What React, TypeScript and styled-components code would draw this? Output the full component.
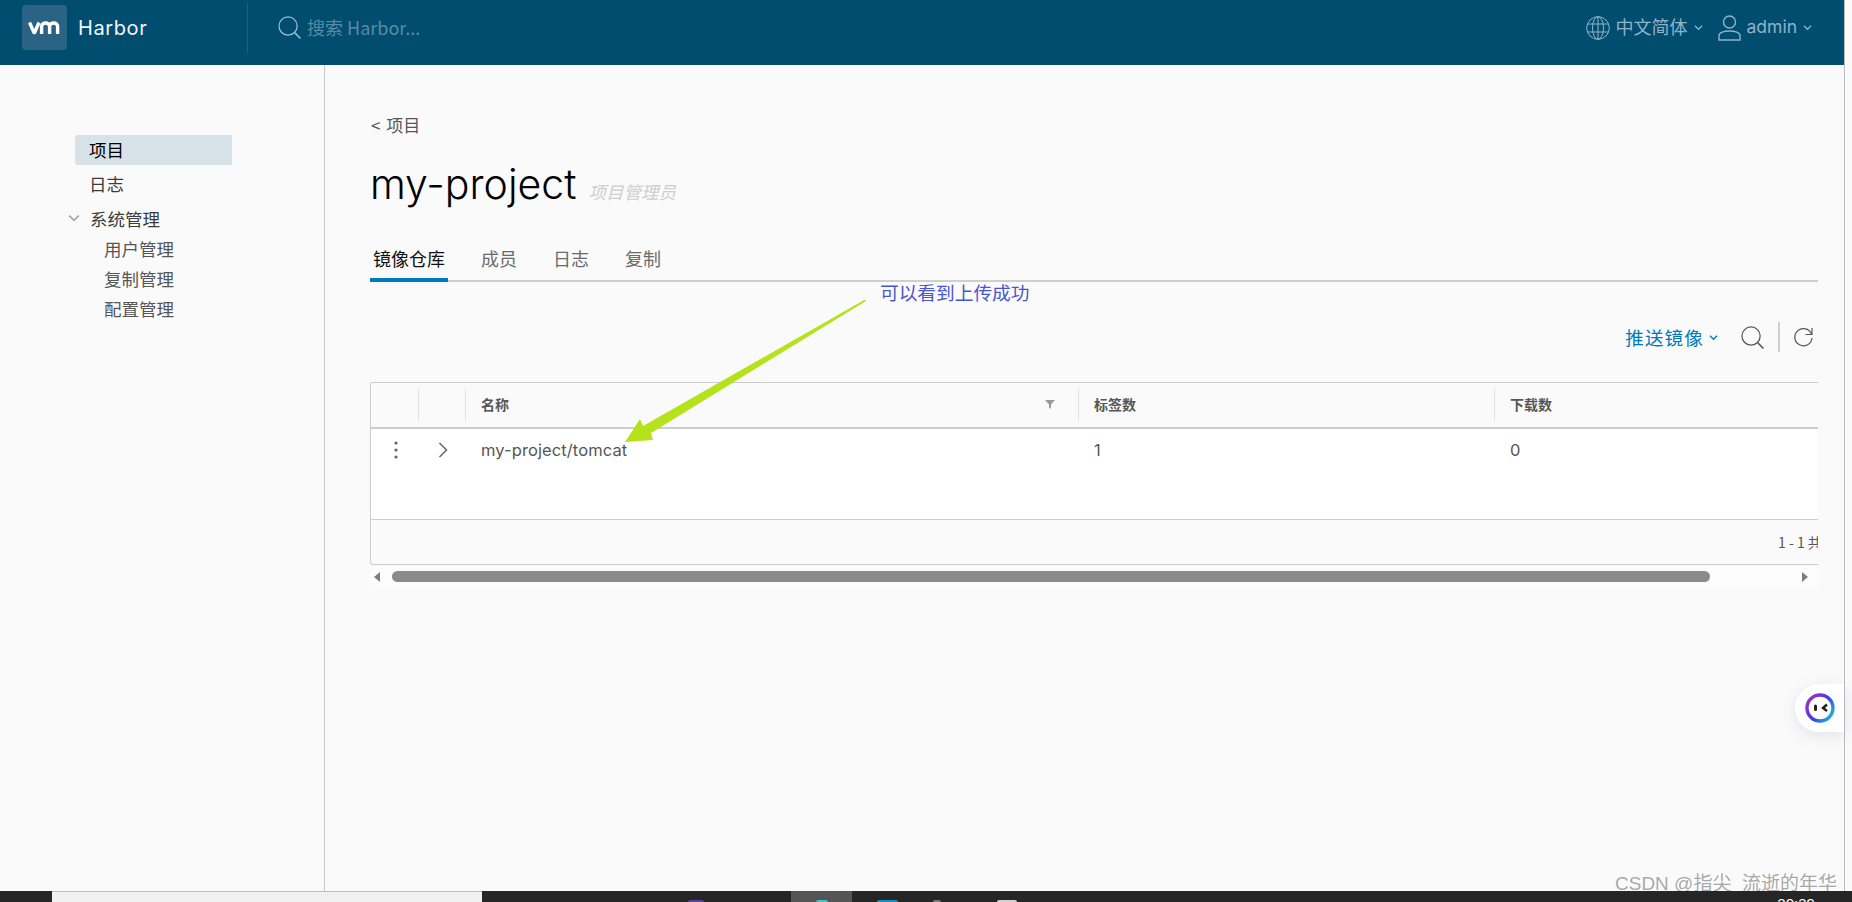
import styled, { createGlobalStyle } from 'styled-components';

const GlobalStyle = createGlobalStyle`
  html, body {
    margin: 0;
    padding: 0;
    height: 902px;
    overflow: hidden;
    background: #fafafa;
    font-family: Inter, "Noto Sans CJK SC", sans-serif;
  }
  * { box-sizing: border-box; }
`;

const cjk = `"Noto Sans CJK SC", Inter, sans-serif`;

const Page = styled.div`
  width: 1852px;
  height: 902px;
  display: flex;
  flex-direction: column;
  overflow: hidden;
  position: relative;
`;

const Shell = styled.div`
  width: 1845px;
  height: 891px;
  border-right: 1px solid #bdbdbd;
  display: flex;
  flex-direction: column;
`;

const Header = styled.header`
  height: 65px;
  background: #004d70;
  display: flex;
  align-items: center;
  padding: 0 0 10px 22px;
  color: #8fb4c8;
`;

const LogoBox = styled.div`
  width: 45px;
  height: 45px;
  border-radius: 4px;
  background: #2a6384;
  display: flex;
  align-items: center;
  justify-content: center;
`;

const Brand = styled.span`
  margin-left: 11px;
  width: 169px;
  font-size: 20px;
  letter-spacing: 0.6px;
  color: #f2f6f8;
`;

const HeaderDivider = styled.div`
  width: 1px;
  height: 50px;
  background: #1d6083;
`;

const HeaderSearch = styled.div`
  margin-left: 30px;
  display: flex;
  align-items: center;
  gap: 6px;
  flex: 1;
  font-family: ${cjk};
  font-size: 18px;
  color: #5a8aa5;
`;

const PlaceholderText = styled.span`
  padding-bottom: 2px;
`;

const HeaderMenu = styled.div<{ $right: number }>`
  display: flex;
  align-items: center;
  gap: 6px;
  margin-right: ${p => p.$right}px;
  font-family: ${cjk};
  font-size: 18px;
  font-weight: 400;
`;

const MenuLabel = styled.span`
  padding-bottom: 3px;
`;

const AdminName = styled.span`
  padding-bottom: 2px;
  font-family: Inter, sans-serif;
  font-size: 17.5px;
`;

const Body = styled.div`
  flex: 1;
  display: flex;
`;

const Sidebar = styled.nav`
  width: 325px;
  border-right: 1px solid #c8c8c8;
  padding: 70px 0 0 75px;
  font-family: ${cjk};
  font-size: 17.5px;
  color: #444;
`;

const NavItem = styled.div<{ $active?: boolean }>`
  width: 157px;
  height: 30px;
  line-height: 30px;
  padding-left: 14px;
  margin-bottom: 4px;
  border-radius: 3px 0 0 3px;
  background: ${p => (p.$active ? '#d8e3e9' : 'transparent')};
  color: ${p => (p.$active ? '#000' : '#3c3c3c')};
`;

const NavGroup = styled.div`
  height: 30px;
  margin: 0 0 1px -7px;
  display: flex;
  align-items: center;
  gap: 10px;
  color: #3c3c3c;
`;

const NavSub = styled.div`
  height: 30px;
  line-height: 30px;
  padding-left: 29px;
  color: #565656;
`;

const Main = styled.main`
  flex: 1;
  padding: 48px 26px 0 45px;
  min-width: 0;
`;

const BackLink = styled.div`
  height: 24px;
  line-height: 24px;
  padding-left: 1px;
  font-family: ${cjk};
  font-size: 17px;
  word-spacing: 2px;
  color: #565656;
`;

const TitleRow = styled.div`
  margin-top: 22px;
  height: 50px;
  display: flex;
  align-items: baseline;
  gap: 12px;
`;

const Title = styled.h1`
  margin: 0;
  font-family: Inter, sans-serif;
  font-size: 41px;
  line-height: 50px;
  font-weight: 300;
  color: #000;
`;

const TitleRole = styled.span`
  font-family: ${cjk};
  font-style: italic;
  font-size: 17.5px;
  color: #cfcfcf;
`;

const Tabs = styled.div`
  margin-top: 30px;
  height: 43px;
  display: flex;
  gap: 30px;
  border-bottom: 2px solid #cfcfcf;
`;

const Tab = styled.div<{ $active?: boolean }>`
  height: 43px;
  padding: 2px 3px 4px 3px;
  display: flex;
  align-items: center;
  font-family: ${cjk};
  font-size: 18px;
  color: ${p => (p.$active ? '#111' : '#6a6a6a')};
  border-bottom: 4px solid ${p => (p.$active ? '#0079b8' : 'transparent')};
`;

const Toolbar = styled.div`
  margin-top: 40px;
  height: 30px;
  display: flex;
  align-items: center;
  justify-content: flex-end;
  padding-right: 5px;
`;

const PushButton = styled.div`
  display: flex;
  align-items: center;
  gap: 5px;
  margin-right: 23px;
  font-family: ${cjk};
  font-size: 18.5px;
  letter-spacing: 1.2px;
  color: #0079b8;
`;

const ToolDivider = styled.div`
  width: 2px;
  height: 30px;
  background: #cfcfcf;
  margin: 0 14px;
`;

const Table = styled.div`
  margin-top: 30px;
  height: 183px;
  overflow: hidden;
  border: 1px solid #cccccc;
  border-right: none;
  border-radius: 3px 0 0 3px;
`;

const columns = '47px 47px 613px 416px 1fr';

const HeadRow = styled.div`
  height: 46px;
  display: grid;
  grid-template-columns: ${columns};
  align-items: center;
  border-bottom: 2px solid #cccccc;
  background: #fafafa;
`;

const HeadCell = styled.div<{ $first?: boolean }>`
  height: 32px;
  display: flex;
  align-items: center;
  justify-content: space-between;
  padding: 0 23px 2px 15px;
  border-left: ${p => (p.$first ? 'none' : '1px solid #e2e2e2')};
  font-family: ${cjk};
  font-size: 14px;
  font-weight: 700;
  color: #565656;
`;

const DataRow = styled.div`
  height: 91px;
  display: grid;
  grid-template-columns: ${columns};
  background: #fff;
  border-bottom: 1px solid #cccccc;
`;

const DataCell = styled.div<{ $icon?: boolean }>`
  height: 42px;
  display: flex;
  align-items: center;
  justify-content: ${p => (p.$icon ? 'center' : 'flex-start')};
  padding-left: ${p => (p.$icon ? 2 : 16)}px;
  font-size: 16.5px;
  letter-spacing: 0.1px;
  color: #565656;
`;

const TableFooter = styled.div`
  height: 44px;
  display: flex;
  align-items: center;
  padding-left: 1407px;
  white-space: nowrap;
  font-family: ${cjk};
  font-size: 14px;
  color: #565656;
`;

const ScrollBar = styled.div`
  height: 21px;
  margin-top: 1px;
  display: flex;
  align-items: center;
  background: #fcfcfc;
  padding: 0 8px 0 4px;
`;

const ScrollArrow = styled.div<{ $dir: 'left' | 'right' }>`
  width: 0;
  height: 0;
  border-top: 5px solid transparent;
  border-bottom: 5px solid transparent;
  ${p =>
    p.$dir === 'left'
      ? 'border-right: 6px solid #7e7e7e;'
      : 'border-left: 6px solid #7e7e7e; margin-left: 92px;'}
`;

const ScrollThumb = styled.div`
  margin-left: 12px;
  width: 1318px;
  height: 11px;
  border-radius: 6px;
  background: #8a8a8a;
`;

const Note = styled.div`
  position: absolute;
  left: 880px;
  top: 279px;
  font-family: ${cjk};
  font-size: 18.7px;
  line-height: 26px;
  color: #4a56cf;
`;

const ArrowOverlay = styled.svg`
  position: absolute;
  left: 0;
  top: 0;
  pointer-events: none;
`;

const Bubble = styled.div`
  position: absolute;
  left: 1795px;
  top: 684px;
  width: 49px;
  height: 48px;
  border-radius: 24px 0 0 24px;
  background: #fff;
  box-shadow: 0 4px 16px rgba(90, 90, 140, 0.14);
  display: flex;
  align-items: center;
  padding-left: 10px;
`;

const Watermark = styled.div`
  position: absolute;
  left: 1615px;
  top: 874px;
  font-family: "Liberation Sans", ${cjk};
  font-size: 19px;
  line-height: 20px;
  white-space: nowrap;
  color: rgba(130, 130, 130, 0.7);
  text-shadow: 1px 1px 1px rgba(255, 255, 255, 0.7);
`;

const Taskbar = styled.footer`
  height: 11px;
  background: #262626;
  display: flex;
  overflow: hidden;
  position: relative;
  z-index: 1;
  color: #fff;
`;

const TaskSearch = styled.div`
  margin-left: 52px;
  width: 430px;
  background: #f0f0f0;
  border-top: 1px solid #bdbdbd;
`;

const TaskChip = styled.div<{ $left: number; $width: number; $color: string }>`
  margin: 9px 0 0 ${p => p.$left}px;
  width: ${p => p.$width}px;
  height: 2px;
  border-radius: 2px 2px 0 0;
  background: ${p => p.$color};
`;

const TaskActive = styled.div`
  margin-left: 87px;
  width: 61px;
  background: #555;
  display: flex;
  justify-content: center;
`;

const TaskText = styled.div<{ $left: number }>`
  margin-left: ${p => p.$left}px;
  padding-top: 4px;
  font-family: "Liberation Sans", sans-serif;
  font-size: 15px;
  line-height: 18px;
`;

const SearchIcon = ({ color, size }: { color: string; size: number }) => (
  <svg width={size} height={size} viewBox="0 0 24 24" fill="none" stroke={color} strokeWidth="1.3">
    <circle cx="10.5" cy="10.5" r="9.5" />
    <path d="M17.6 17.6 23.4 23.4" strokeWidth="1.6" />
  </svg>
);

const Chevron = ({ color, size = 9 }: { color: string; size?: number }) => (
  <svg width={size} height={size} viewBox="0 0 10 10" fill="none" stroke={color} strokeWidth="1.4">
    <path d="M1 3 5 7 9 3" />
  </svg>
);

const App = () => (
  <Page>
    <GlobalStyle />
    <Shell>
      <Header>
        <LogoBox>
          <svg width="33" height="14" viewBox="0 0 33 14" fill="none" stroke="#fff" strokeWidth="3.4" strokeLinejoin="round">
            <path d="M1.5 1.5 6 11.5h.6L11 1.5" />
            <path d="M13.6 13V5.5c0-4.6 8-4.6 8 0V13M21.6 5.5c0-4.6 8-4.6 8 0V13" />
          </svg>
        </LogoBox>
        <Brand>Harbor</Brand>
        <HeaderDivider />
        <HeaderSearch>
          <SearchIcon color="#9dc0d2" size={23} />
          <PlaceholderText>搜索 Harbor...</PlaceholderText>
        </HeaderSearch>
        <HeaderMenu $right={15}>
          <svg width="24" height="24" viewBox="0 0 24 24" fill="none" stroke="#8fb4c8" strokeWidth="1">
            <circle cx="12" cy="12" r="11.3" />
            <ellipse cx="12" cy="12" rx="5.5" ry="11.3" />
            <path d="M12 .7v22.6M1.5 8h21M1.5 16h21" />
          </svg>
          <MenuLabel>中文简体</MenuLabel>
          <Chevron color="#8fb4c8" />
        </HeaderMenu>
        <HeaderMenu $right={32}>
          <svg width="23" height="26" viewBox="0 0 23 26" fill="none" stroke="#8fb4c8" strokeWidth="1.4">
            <circle cx="11.5" cy="7" r="6" />
            <path d="M1 25v-4.5c0-6 21-6 21 0V25z" />
          </svg>
          <AdminName>admin</AdminName>
          <Chevron color="#8fb4c8" />
        </HeaderMenu>
      </Header>
      <Body>
        <Sidebar>
          <NavItem $active>项目</NavItem>
          <NavItem>日志</NavItem>
          <NavGroup>
            <Chevron color="#a8a8a8" size={12} />
            系统管理
          </NavGroup>
          <NavSub>用户管理</NavSub>
          <NavSub>复制管理</NavSub>
          <NavSub>配置管理</NavSub>
        </Sidebar>
        <Main>
          <BackLink>&lt; 项目</BackLink>
          <TitleRow>
            <Title>my-project</Title>
            <TitleRole>项目管理员</TitleRole>
          </TitleRow>
          <Tabs>
            <Tab $active>镜像仓库</Tab>
            <Tab>成员</Tab>
            <Tab>日志</Tab>
            <Tab>复制</Tab>
          </Tabs>
          <Toolbar>
            <PushButton>
              推送镜像
              <Chevron color="#0079b8" />
            </PushButton>
            <SearchIcon color="#565656" size={23} />
            <ToolDivider />
            <svg width="19" height="20" viewBox="0 0 19 20" fill="none" stroke="#565656" strokeWidth="1.2">
              <path d="M17.6 7.5A8.6 8.6 0 1 0 18 11" />
              <path d="M18 1v6.5h-6.5" />
            </svg>
          </Toolbar>
          <Table>
            <HeadRow>
              <HeadCell $first />
              <HeadCell />
              <HeadCell>
                名称
                <svg width="10" height="10" viewBox="0 0 10 10">
                  <path d="M0 1h10L6 5.5V10L4 8.5V5.5z" fill="#9a9a9a" />
                </svg>
              </HeadCell>
              <HeadCell>标签数</HeadCell>
              <HeadCell>下载数</HeadCell>
            </HeadRow>
            <DataRow>
              <DataCell $icon>
                <svg width="4" height="18" viewBox="0 0 4 18" fill="#666">
                  <circle cx="2" cy="2" r="1.6" />
                  <circle cx="2" cy="9" r="1.6" />
                  <circle cx="2" cy="16" r="1.6" />
                </svg>
              </DataCell>
              <DataCell $icon>
                <svg width="10" height="16" viewBox="0 0 10 16" fill="none" stroke="#666" strokeWidth="1.5">
                  <path d="M1.5 1 8.5 8 1.5 15" />
                </svg>
              </DataCell>
              <DataCell>my-project/tomcat</DataCell>
              <DataCell>1</DataCell>
              <DataCell>0</DataCell>
            </DataRow>
            <TableFooter>1 - 1 共 1 条记录</TableFooter>
          </Table>
          <ScrollBar>
            <ScrollArrow $dir="left" />
            <ScrollThumb />
            <ScrollArrow $dir="right" />
          </ScrollBar>
        </Main>
      </Body>
    </Shell>
    <Taskbar>
      <TaskSearch />
      <TaskChip $left={206} $width={16} $color="#5b3e9e" />
      <TaskActive>
        <TaskChip $left={0} $width={12} $color="#35c4d0" />
      </TaskActive>
      <TaskChip $left={25} $width={21} $color="#0a8fd0" />
      <TaskChip $left={35} $width={8} $color="#7a7a7a" />
      <TaskChip $left={56} $width={20} $color="#d0d0d0" />
      <TaskText $left={502}>»</TaskText>
      <TaskText $left={250}>20:39</TaskText>
    </Taskbar>
    <Note>可以看到上传成功</Note>
    <ArrowOverlay width="1852" height="902" viewBox="0 0 1852 902">
      <path d="M865 299.5 866 301 651 433 653 440 625 442 640 419 643 426z" fill="#b4e31c" />
    </ArrowOverlay>
    <Bubble>
      <svg width="30" height="30" viewBox="0 0 30 30">
        <defs>
          <linearGradient id="ring" x1="0" y1="0.2" x2="1" y2="0.9">
            <stop offset="0" stopColor="#a12fc9" />
            <stop offset="0.5" stopColor="#3f3fe0" />
            <stop offset="1" stopColor="#17c4e0" />
          </linearGradient>
        </defs>
        <circle cx="15" cy="15" r="13" fill="#fff" stroke="url(#ring)" strokeWidth="3.4" />
        <rect x="9" y="11.5" width="3" height="6.5" rx="1.5" fill="#222" />
        <path d="M22 11.5 18 15 22 18" fill="none" stroke="#222" strokeWidth="2.4" />
      </svg>
    </Bubble>
    <Watermark>CSDN @指尖_流逝的年华</Watermark>
  </Page>
);

export default App;
